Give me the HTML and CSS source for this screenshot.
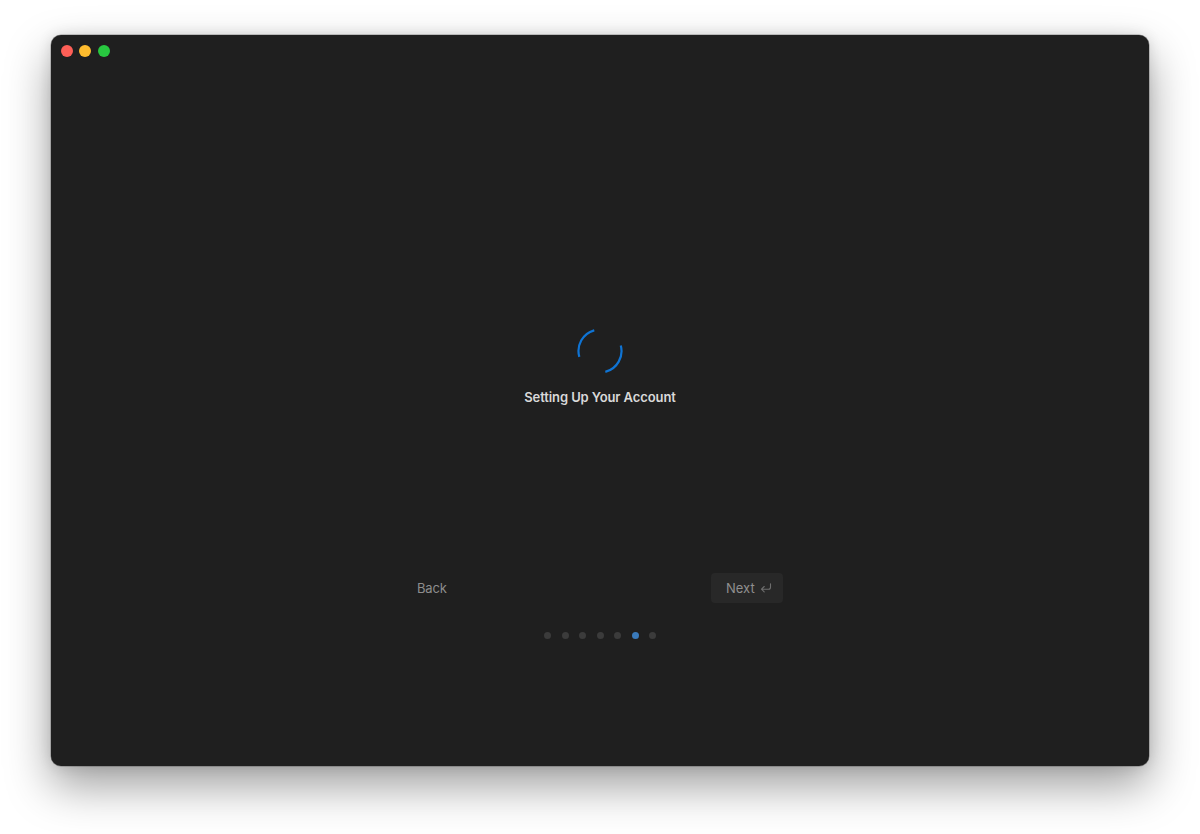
FILE: index.html
```html
<!DOCTYPE html>
<html>
<head>
<meta charset="utf-8">
<link rel="stylesheet" href="styles.css">
</head>
<body>
<div class="window">
  <div class="titlebar">
    <span class="light red"></span>
    <span class="light yellow"></span>
    <span class="light green"></span>
  </div>
  <div class="content">
    <svg class="spinner" width="48" height="48" viewBox="0 0 48 48">
      <circle cx="24" cy="24" r="21.5" fill="none" stroke="#0f74d4" stroke-width="2.2" stroke-dasharray="33.77 33.77" transform="rotate(164 24 24)"/>
    </svg>
    <div class="title">Setting Up Your Account</div>
    <div class="actions">
      <button class="btn back">Back</button>
      <button class="btn next">Next
        <svg class="ret" width="12" height="10" viewBox="0 0 12 10">
          <path d="M10.5 0.8 V4.2 A2 2 0 0 1 8.5 6.2 H1.5 M4.2 3.5 L1.5 6.2 L4.2 8.9" fill="none" stroke="#6e6e6e" stroke-width="1.1" stroke-linecap="round" stroke-linejoin="round"/>
        </svg>
      </button>
    </div>
    <div class="dots">
      <span class="dot"></span>
      <span class="dot"></span>
      <span class="dot"></span>
      <span class="dot"></span>
      <span class="dot"></span>
      <span class="dot active"></span>
      <span class="dot"></span>
    </div>
  </div>
</div>
</body>
</html>
```

FILE: styles.css
```css
html, body {
  margin: 0;
  padding: 0;
  background: #ffffff;
  width: 1200px;
  height: 834px;
  overflow: hidden;
}
body {
  font-family: Inter, "Liberation Sans", sans-serif;
  padding-top: 35px;
  padding-left: 51px;
  box-sizing: border-box;
}
.window {
  width: 1098px;
  height: 731px;
  background: #1f1f1f;
  border-radius: 10px;
  box-shadow: 0 20px 45px rgba(0, 0, 0, 0.38), 0 0 0 0.5px rgba(0, 0, 0, 0.35), 0 0 14px rgba(0,0,0,0.12);
  box-sizing: border-box;
  display: flex;
  flex-direction: column;
}
.titlebar {
  display: flex;
  gap: 6.5px;
  padding: 9.5px 0 0 9.5px;
  height: 12px;
}
.light {
  width: 12px;
  height: 12px;
  border-radius: 50%;
  display: block;
}
.red { background: #fe5f57; }
.yellow { background: #febc2e; }
.green { background: #28c840; }
.content {
  display: flex;
  flex-direction: column;
  align-items: center;
  padding-top: 270.5px;
}
.spinner {
  display: block;
}
.title {
  margin-top: 14px;
  font-size: 13px;
  line-height: 16px;
  font-weight: 600;
  color: #d9d9d9;
  letter-spacing: -0.1px;
}
.actions {
  margin-top: 168px;
  width: 366px;
  display: flex;
  justify-content: space-between;
  align-items: center;
}
.btn {
  font-family: Inter, "Liberation Sans", sans-serif;
  font-size: 13px;
  border: none;
  color: #8d8d8d;
  background: transparent;
  height: 30px;
  padding: 0;
  display: flex;
  align-items: center;
  cursor: default;
}
.back {
  letter-spacing: -0.2px;
}
.next {
  background: #282828;
  border-radius: 4px;
  width: 72px;
  padding: 0 0 0 15px;
  gap: 5px;
  color: #8f8f8f;
}
.ret {
  display: block;
  margin-top: -1px;
}
.dots {
  margin-top: 28.5px;
  display: flex;
  gap: 10.5px;
}
.dot {
  width: 7px;
  height: 7px;
  border-radius: 50%;
  background: #3b3b3b;
  display: block;
}
.dot.active {
  background: #3a7abb;
}
```
